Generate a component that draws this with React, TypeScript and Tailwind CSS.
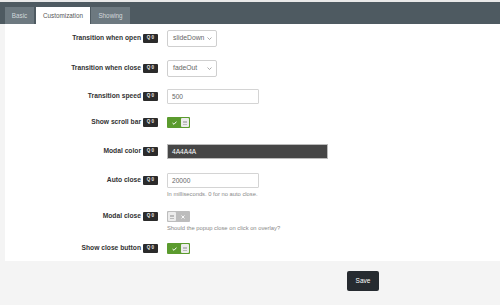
import React from "react";

const font = { fontFamily: '"Liberation Sans", Arial, sans-serif' };

function Badge() {
  return (
    <span className="ml-[2px] inline-flex h-[9px] w-[15px] items-center justify-center rounded-[1px] bg-[#2b2b2b] text-[4.5px] font-bold leading-none text-[#e6e6e6]">
      Q 0
    </span>
  );
}

function Label({ text, h }: { text: string; h: string }) {
  return (
    <div className={`flex w-[153px] shrink-0 items-center justify-end ${h}`}>
      <span className="text-[6.7px] font-bold text-[#333]">{text}</span>
      <Badge />
    </div>
  );
}

function Select({ value }: { value: string }) {
  return (
    <div className="ml-[9px] flex h-[17px] w-[50px] items-center justify-between rounded-[2px] border border-[#cfcfcf] bg-white pl-[5px] pr-[4px] text-[6.8px] text-[#666]">
      <span>{value}</span>
      <svg width="5" height="3" viewBox="0 0 5 3">
        <path d="M0.5 0.5 L2.5 2.5 L4.5 0.5" fill="none" stroke="#888" strokeWidth="0.7" />
      </svg>
    </div>
  );
}

function Knob() {
  return (
    <div className="flex h-[9px] w-[8px] flex-col items-center justify-center gap-[1px] rounded-[1px] bg-[#ececec]">
      <div className="h-[0.5px] w-[4px] bg-[#bbb]" />
      <div className="h-[0.5px] w-[4px] bg-[#bbb]" />
      <div className="h-[0.5px] w-[4px] bg-[#bbb]" />
    </div>
  );
}

function Toggle({ on }: { on: boolean }) {
  if (on) {
    return (
      <div className="ml-[9px] flex h-[11px] w-[23px] items-center rounded-[1px] bg-[#5b9b2e] p-[1px]">
        <div className="flex flex-1 items-center justify-center">
          <svg width="5" height="4" viewBox="0 0 5 4">
            <path d="M0.5 2 L2 3.3 L4.5 0.6" fill="none" stroke="#fff" strokeWidth="1" />
          </svg>
        </div>
        <Knob />
      </div>
    );
  }
  return (
    <div className="ml-[9px] flex h-[11px] w-[23px] items-center rounded-[1px] bg-[#bdbdbd] p-[1px]">
      <Knob />
      <div className="flex flex-1 items-center justify-center">
        <svg width="4" height="4" viewBox="0 0 4 4">
          <path d="M0.5 0.5 L3.5 3.5 M3.5 0.5 L0.5 3.5" fill="none" stroke="#fff" strokeWidth="0.9" />
        </svg>
      </div>
    </div>
  );
}

function Help({ text }: { text: string }) {
  return <div className="ml-[9px] mt-[2px] text-[5.8px] leading-[8px] text-[#888]">{text}</div>;
}

export default function App() {
  return (
    <div className="relative h-[305px] w-[500px] overflow-hidden bg-[#f4f4f4]" style={font}>
      <div className="h-[2px] bg-[#e9e9e9]" />
      <div className="flex h-[22px] items-end gap-[1px] bg-[#4e5a61] pl-[5px]">
        <div className="flex h-[17px] w-[29px] items-center justify-center bg-[#6d7980] text-[6.3px] text-[#d3d8db]">Basic</div>
        <div className="ml-[1px] flex h-[17px] w-[54px] items-center justify-center bg-white text-[6.3px] text-[#555]">Customization</div>
        <div className="flex h-[17px] w-[39px] items-center justify-center bg-[#6d7980] text-[6.3px] text-[#d3d8db]">Showing</div>
      </div>
      <div className="ml-[5px] flex h-[237px] flex-col bg-white pt-[6px]">
        <div className="flex items-start">
          <Label text="Transition when open" h="h-[17px]" />
          <Select value="slideDown" />
        </div>
        <div className="mt-[13px] flex items-start">
          <Label text="Transition when close" h="h-[17px]" />
          <Select value="fadeOut" />
        </div>
        <div className="mt-[12px] flex items-start">
          <Label text="Transition speed" h="h-[15px]" />
          <div className="ml-[9px] flex h-[15px] w-[92px] items-center rounded-[1px] border border-[#d4d4d4] pl-[4px] text-[6.6px] text-[#666]">500</div>
        </div>
        <div className="mt-[13px] flex items-start">
          <Label text="Show scroll bar" h="h-[11px]" />
          <Toggle on />
        </div>
        <div className="mt-[16px] flex items-start">
          <Label text="Modal color" h="h-[15px]" />
          <div className="ml-[9px] flex h-[15px] w-[161px] items-center border border-[#bbb] bg-[#464646] pl-[4px] text-[6.6px] text-white">4A4A4A</div>
        </div>
        <div className="mt-[14px] flex items-start">
          <Label text="Auto close" h="h-[15px]" />
          <div className="flex flex-col">
            <div className="ml-[9px] flex h-[15px] w-[92px] items-center rounded-[1px] border border-[#d4d4d4] pl-[4px] text-[6.6px] text-[#666]">20000</div>
            <Help text="In milliseconds. 0 for no auto close." />
          </div>
        </div>
        <div className="mt-[13px] flex items-start">
          <Label text="Modal close" h="h-[11px]" />
          <div className="flex flex-col">
            <Toggle on={false} />
            <Help text="Should the popup close on click on overlay?" />
          </div>
        </div>
        <div className="mt-[11px] flex items-start">
          <Label text="Show close button" h="h-[11px]" />
          <Toggle on />
        </div>
      </div>
      <div className="pl-[347px] pt-[10px]">
        <div className="flex h-[20px] w-[32px] items-center justify-center rounded-[2px] bg-[#262b30] text-[6.5px] text-white">Save</div>
      </div>
    </div>
  );
}
